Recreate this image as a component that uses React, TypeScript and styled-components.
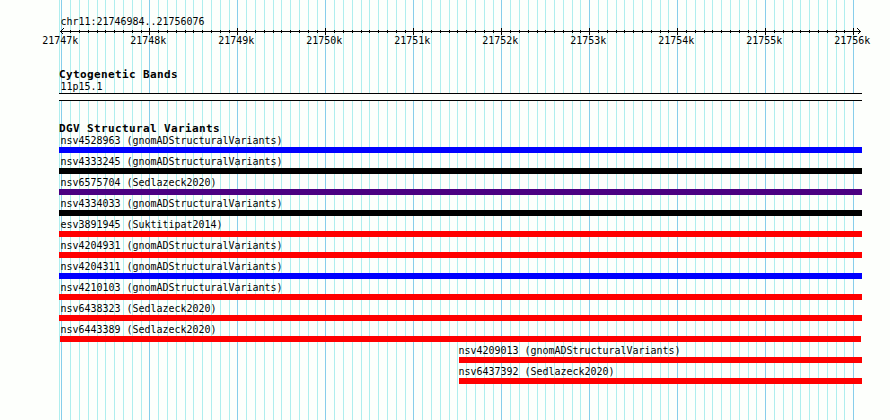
import styled, { createGlobalStyle } from "styled-components";

const PLOT_START = 59;
const PLOT_END = 862;
const PX_PER_TICK = 8.7989;

const GlobalStyle = createGlobalStyle`
  body {
    margin: 0;
    background: #fdfffc;
    overflow: hidden;
  }
`;

const Browser = styled.main`
  position: relative;
  width: 890px;
  height: 420px;
  overflow: hidden;
  box-sizing: border-box;
  padding-top: 15px;
  background: #fdfffc;
  color: #000;
  font-family: "DejaVu Sans Mono", "Liberation Mono", monospace;
`;

const Grid = styled.svg`
  position: absolute;
  inset: 0;
`;

const Content = styled.div`
  position: relative;
  width: ${PLOT_END - PLOT_START}px;
  margin-left: ${PLOT_START}px;
`;

const Label = styled.svg`
  display: block;
  height: 12px;
  overflow: visible;
  font-size: 10.5px;
  white-space: pre;
`;

const Heading = styled.h2`
  height: 13px;
  margin: 0;
  font-size: 11px;
  line-height: 15px;
  font-weight: bold;
  letter-spacing: 0.38px;
  white-space: pre;
`;

const Ruler = styled.svg`
  display: block;
  margin-top: 1px;
  overflow: visible;
`;

const TickLabels = styled.div`
  display: grid;
  grid-template-columns: repeat(10, 88px);
  margin-top: -1px;
  margin-left: -17px;
`;

const Bands = styled.section`
  margin-top: 21px;
`;

const Band = styled.div`
  height: 6px;
  margin-top: 1px;
  border: solid #000;
  border-width: 1px 0;
  background: #fdfffc;
`;

const Variants = styled.section`
  margin-top: 20px;
`;

const Variant = styled.div<{ $start: number; $end: number }>`
  height: 21px;
  margin-left: ${({ $start }) => $start - PLOT_START}px;
  width: ${({ $start, $end }) => $end - $start}px;
`;

const Bar = styled.div<{ $color: string }>`
  height: 6px;
  margin-top: 1px;
  background: ${({ $color }) => $color};
`;

const ticks = Array.from({ length: 91 }, (_, i) => ({
  x: Math.floor(61.86 + i * PX_PER_TICK),
  major: i % 10 === 0,
}));

const variants = [
  { name: "nsv4528963 (gnomADStructuralVariants)", color: "#0000ff" },
  { name: "nsv4333245 (gnomADStructuralVariants)", color: "#000000" },
  { name: "nsv6575704 (Sedlazeck2020)", color: "#4b0082" },
  { name: "nsv4334033 (gnomADStructuralVariants)", color: "#000000" },
  { name: "esv3891945 (Suktitipat2014)", color: "#ff0000" },
  { name: "nsv4204931 (gnomADStructuralVariants)", color: "#ff0000" },
  { name: "nsv4204311 (gnomADStructuralVariants)", color: "#0000ff" },
  { name: "nsv4210103 (gnomADStructuralVariants)", color: "#ff0000" },
  { name: "nsv6438323 (Sedlazeck2020)", color: "#ff0000" },
  { name: "nsv6443389 (Sedlazeck2020)", color: "#ff0000", start: 60, end: 861, indent: 0.4 },
  { name: "nsv4209013 (gnomADStructuralVariants)", color: "#ff0000", start: 459, indent: -0.6 },
  { name: "nsv6437392 (Sedlazeck2020)", color: "#ff0000", start: 459, indent: -0.6 },
];

function TrackLabel({ text, indent = 1.4 }: { text: string; indent?: number }) {
  const width = text.length * 6;

  return (
    <Label width={width}>
      <text x={indent} y={10} textLength={width} lengthAdjust="spacingAndGlyphs">
        {text}
      </text>
    </Label>
  );
}

export default function App() {
  return (
    <Browser>
      <GlobalStyle />
      <Grid width={890} height={420} shapeRendering="crispEdges">
        <rect x={59} width={1} height={420} fill="#afeeee" />
        {ticks.map(({ x, major }) => (
          <rect key={x} x={x} width={1} height={420} fill={major ? "#87ceeb" : "#afeeee"} />
        ))}
      </Grid>
      <Content>
        <TrackLabel text="chr11:21746984..21756076" />
        <Ruler width={803} height={7} shapeRendering="crispEdges">
          <rect x={1} y={3} width={801} height={1} />
          {ticks.slice(1).map(({ x, major }) => (
            <rect
              key={x}
              x={x - PLOT_START}
              y={major ? 0 : 2}
              width={1}
              height={major ? 7 : 3}
            />
          ))}
          <path d="M4.5 .5 1.5 3.5 4.5 6.5M798.5 .5 801.5 3.5 798.5 6.5" fill="none" stroke="#000" />
        </Ruler>
        <TickLabels>
          {Array.from({ length: 10 }, (_, i) => (
            <TrackLabel key={i} text={`${21747 + i}k`} indent={0.2} />
          ))}
        </TickLabels>
        <Bands>
          <Heading>Cytogenetic Bands</Heading>
          <TrackLabel text="11p15.1" />
          <Band />
        </Bands>
        <Variants>
          <Heading>DGV Structural Variants</Heading>
          {variants.map(({ name, color, start = PLOT_START, end = PLOT_END, indent }) => (
            <Variant key={name} $start={start} $end={end}>
              <TrackLabel text={name} indent={indent} />
              <Bar $color={color} />
            </Variant>
          ))}
        </Variants>
      </Content>
    </Browser>
  );
}
